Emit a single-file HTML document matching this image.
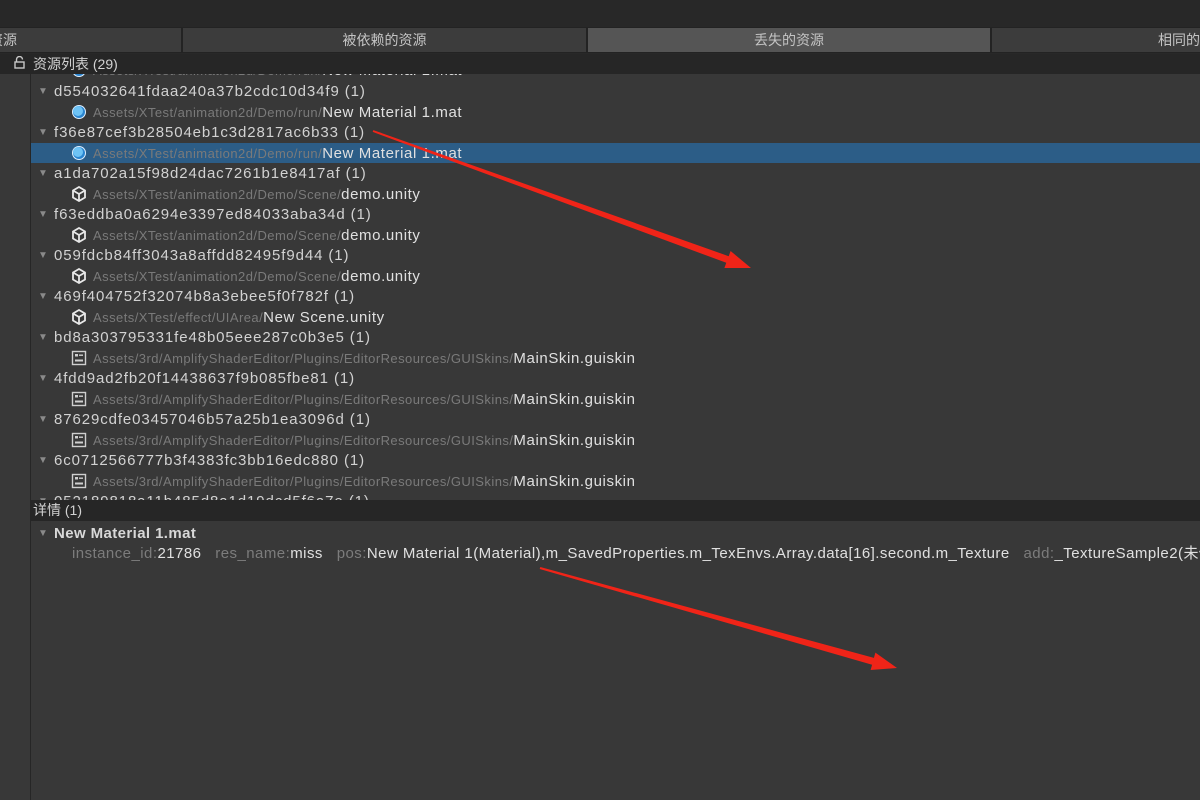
<!DOCTYPE html>
<html><head><meta charset="utf-8"><style>
*{margin:0;padding:0;box-sizing:border-box}
body{width:1200px;height:800px;overflow:hidden;background:#383838;font-family:"Liberation Sans","Noto Sans CJK SC",sans-serif;color:#d2d2d2;position:relative}
.abs{position:absolute;white-space:nowrap}
.top{left:0;top:0;width:1200px;height:27px;background:#282828}
.tabs{left:0;top:27px;width:1200px;height:27px;background:#282828}
.tab{position:absolute;top:0;height:26px;background:#3c3c3c;border:1px solid #232323;font-size:14px;line-height:24px;color:#c4c4c4;text-align:center;overflow:hidden}
.tab.act{background:#555555}
.hdr{left:0;top:54px;width:1200px;height:20px;background:#262626}
.side{left:0;top:74px;width:31px;height:726px;background:#383838;border-right:1px solid #262626}
.row{position:absolute;left:31px;width:1169px;height:20.5px;font-size:14px;line-height:21px;white-space:nowrap;overflow:hidden}
.tri{position:absolute;left:7px;top:0;color:#8a8a8a;font-size:10px}
.hash{position:absolute;left:23px;color:#d2d2d2;font-size:15px;letter-spacing:0.9px}
.path{position:absolute;left:62px;color:#7a7a7a;font-size:13px;letter-spacing:0.45px}
.path b{font-weight:normal;color:#e0e0e0;font-size:15px;letter-spacing:0.6px}
.ic{position:absolute;left:40px;top:2px;width:16px;height:16px}
.sel{background:#2c5d87}
.det b{letter-spacing:0.45px !important}
</style></head><body>
<div class="abs top"></div>
<div class="abs tabs">
<div class="tab" style="left:-222px;width:404px"><span style="position:absolute;left:168px;top:0">依赖的资源</span></div>
<div class="tab" style="left:182px;width:405px">被依赖的资源</div>
<div class="tab act" style="left:587px;width:404px">丢失的资源</div>
<div class="tab" style="left:991px;width:404px">相同的资源</div>
</div>
<div class="abs hdr"></div>
<div class="abs side"></div>
<div id="list" class="abs" style="left:0;top:74px;width:1200px;height:426px;overflow:hidden">
</div>
<div class="abs" style="left:31px;top:54px;width:1169px;height:20px;background:#262626;font-size:14px;line-height:20px;color:#d2d2d2;padding-left:2px">资源列表 (29)</div>
<div class="abs" style="left:14px;top:56px;width:10px;height:12px">
<svg width="11" height="13" viewBox="0 0 11 13"><path d="M2.5 6V3.5a3 3 0 0 1 6 0" fill="none" stroke="#c8c8c8" stroke-width="1.4"/><rect x="1" y="6" width="9" height="6" fill="none" stroke="#c8c8c8" stroke-width="1.4"/></svg></div>
<div class="abs" style="left:31px;top:500px;width:1169px;height:21px;background:#262626;font-size:14px;line-height:21px;padding-left:2px">详情 (1)</div>
<div class="row" style="top:523px"><span class="tri">▼</span><span class="hash" style="font-weight:bold;color:#d8d8d8;letter-spacing:0.4px">New Material 1.mat</span></div>
<div class="row" style="top:543px"><span class="path det" style="left:41px;font-size:15px;letter-spacing:0.45px;color:#7c7c7c">instance_id:<b>21786</b>&nbsp;&nbsp;&nbsp;res_name:<b>miss</b>&nbsp;&nbsp;&nbsp;pos:<b>New Material 1(Material),m_SavedProperties.m_TexEnvs.Array.data[16].second.m_Texture</b>&nbsp;&nbsp;&nbsp;add:<b>_TextureSample2(未使用)</b></span></div>
<svg class="abs" style="left:0;top:0" width="1200" height="800">
<polygon fill="#f02418" points="373.3,130.1 728.7,256.2 730.6,251 751,268 724.4,268 726.3,262.8 372.7,131.9"/>
<polygon fill="#f02418" points="540.3,567 873.9,657.9 875.4,652.6 897,668 870.6,670 872.1,664.7 539.7,569"/>
</svg>
<script>
var mat='<svg class="ic" viewBox="0 0 16 16"><circle cx="8" cy="8" r="7" fill="#dfefff"/><circle cx="8" cy="8" r="6" fill="#2a85d0"/><circle cx="7" cy="7" r="5" fill="#6ec3f5"/></svg>';
var uni='<svg class="ic" viewBox="0 0 16 16"><path d="M8 1L14 4.5V11.5L8 15L2 11.5V4.5Z M8 8L14 4.5 M8 8V15 M8 8L2 4.5" fill="none" stroke="#e8e8e8" stroke-width="1.8"/></svg>';
var gui='<svg class="ic" viewBox="0 0 16 16"><rect x="1.5" y="1.5" width="13" height="13" fill="none" stroke="#cfcfcf" stroke-width="1.4"/><rect x="4" y="4" width="3" height="2.5" fill="#cfcfcf"/><rect x="8" y="4.5" width="4" height="1.4" fill="#cfcfcf"/><rect x="4" y="9.5" width="8" height="2" fill="#cfcfcf"/></svg>';
var d=[
['d554032641fdaa240a37b2cdc10d34f9',mat,'Assets/XTest/animation2d/Demo/run/','New Material 1.mat'],
['f36e87cef3b28504eb1c3d2817ac6b33',mat,'Assets/XTest/animation2d/Demo/run/','New Material 1.mat',1],
['a1da702a15f98d24dac7261b1e8417af',uni,'Assets/XTest/animation2d/Demo/Scene/','demo.unity'],
['f63eddba0a6294e3397ed84033aba34d',uni,'Assets/XTest/animation2d/Demo/Scene/','demo.unity'],
['059fdcb84ff3043a8affdd82495f9d44',uni,'Assets/XTest/animation2d/Demo/Scene/','demo.unity'],
['469f404752f32074b8a3ebee5f0f782f',uni,'Assets/XTest/effect/UIArea/','New Scene.unity'],
['bd8a303795331fe48b05eee287c0b3e5',gui,'Assets/3rd/AmplifyShaderEditor/Plugins/EditorResources/GUISkins/','MainSkin.guiskin'],
['4fdd9ad2fb20f14438637f9b085fbe81',gui,'Assets/3rd/AmplifyShaderEditor/Plugins/EditorResources/GUISkins/','MainSkin.guiskin'],
['87629cdfe03457046b57a25b1ea3096d',gui,'Assets/3rd/AmplifyShaderEditor/Plugins/EditorResources/GUISkins/','MainSkin.guiskin'],
['6c0712566777b3f4383fc3bb16edc880',gui,'Assets/3rd/AmplifyShaderEditor/Plugins/EditorResources/GUISkins/','MainSkin.guiskin'],
['052189818a11b485d8a1d19dcd5f6a7e',gui,'Assets/3rd/AmplifyShaderEditor/Plugins/EditorResources/GUISkins/','MainSkin.guiskin']
];
var h='<div class="row" style="top:-14px">'+mat+'<span class="path">Assets/XTest/animation2d/Demo/run/<b>New Material 1.mat</b></span></div>';
d.forEach(function(r,i){var t=7+41*i;
h+='<div class="row" style="top:'+t+'px"><span class="tri">▼</span><span class="hash">'+r[0]+' (1)</span></div>';
h+='<div class="row'+(r[4]?' sel':'')+'" style="top:'+(t+20.5)+'px">'+r[1]+'<span class="path">'+r[2]+'<b>'+r[3]+'</b></span></div>';});
document.getElementById('list').innerHTML=h;
</script>
</body></html>
